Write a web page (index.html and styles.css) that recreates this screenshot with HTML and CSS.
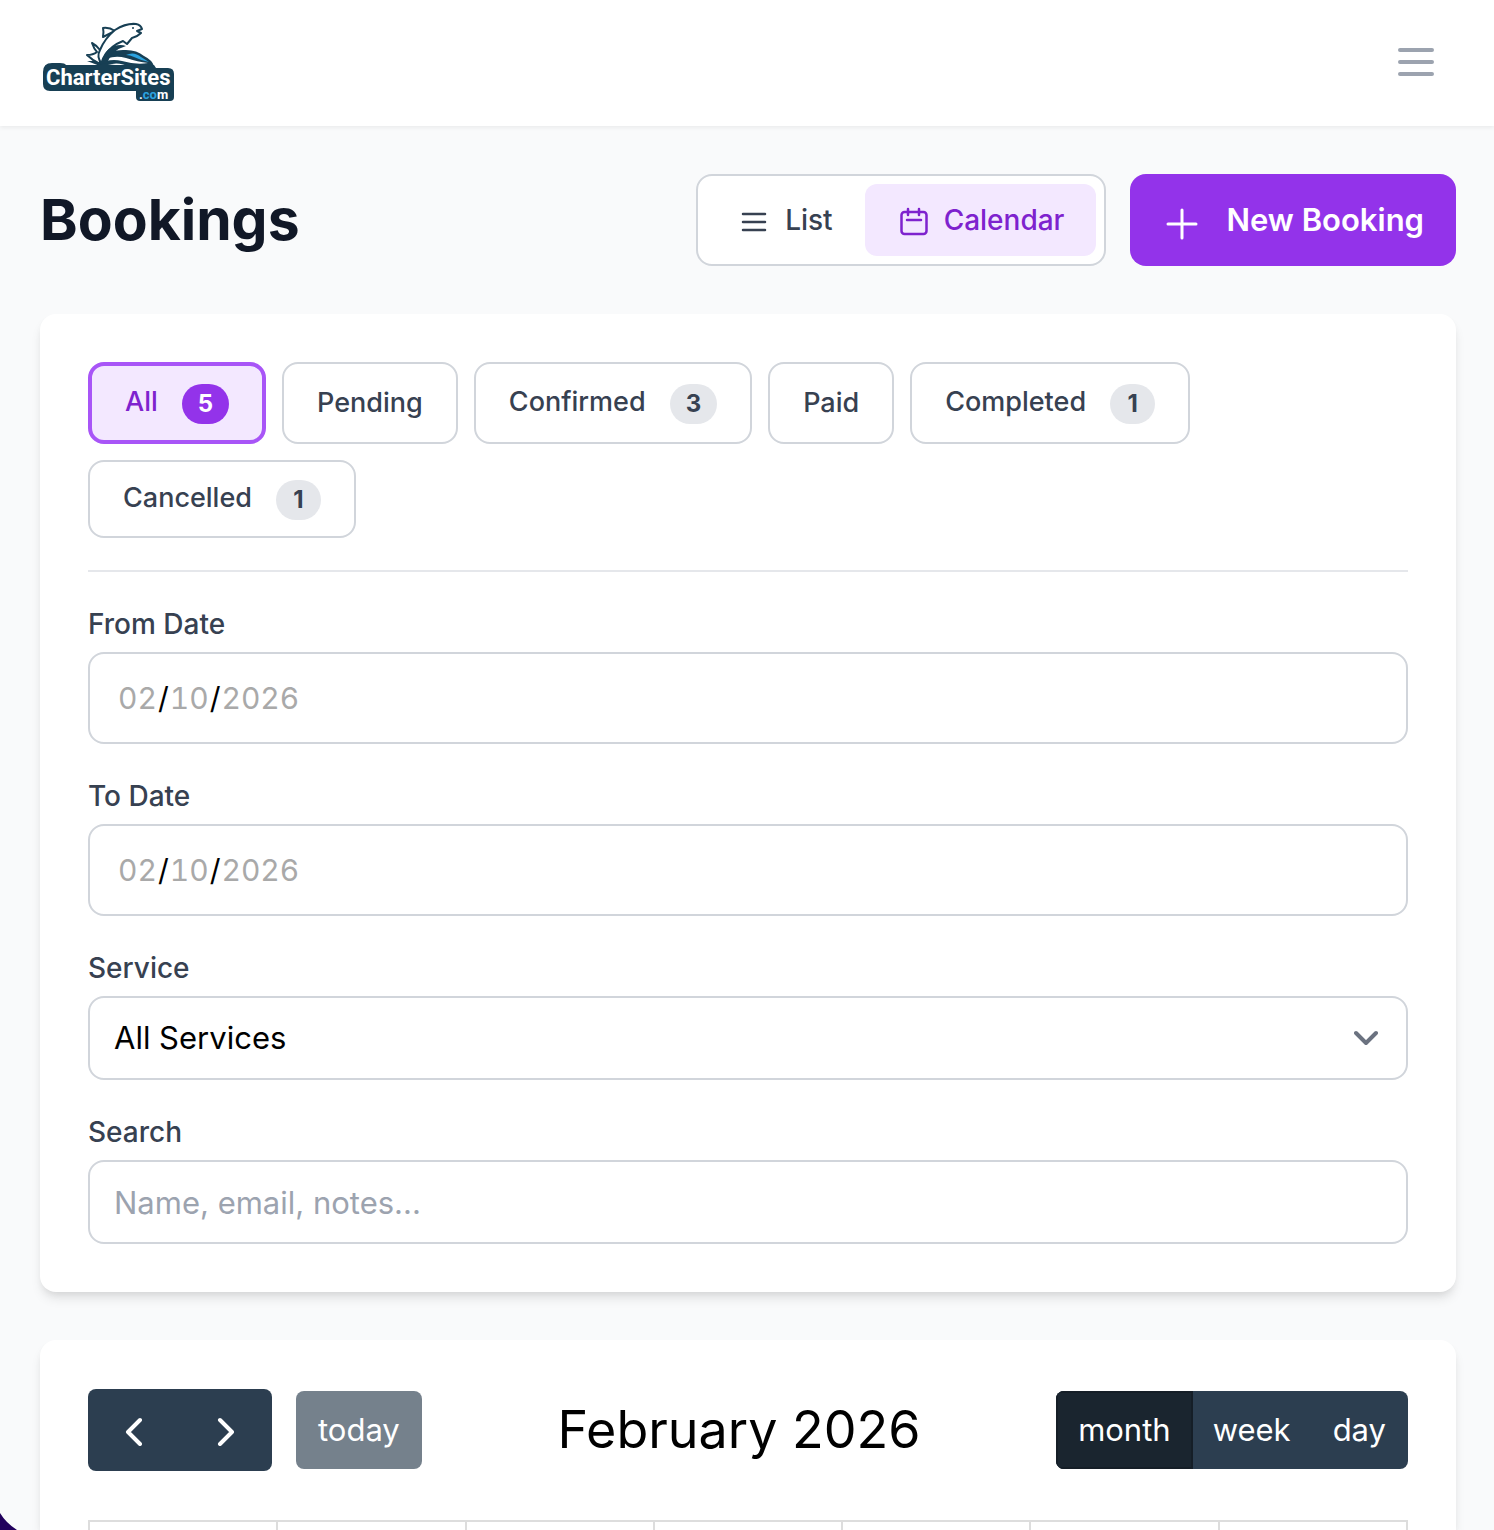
FILE: index.html
```html
<!DOCTYPE html>
<html lang="en">
<head>
<meta charset="utf-8">
<meta name="viewport" content="width=device-width, initial-scale=1">
<title>Bookings</title>
<link rel="stylesheet" href="styles.css">
</head>
<body>
<header class="topbar">
  <a class="brand" href="#" aria-label="CharterSites.com">
    <svg class="logo" viewBox="0 0 136 84" width="136" height="84">
      <!-- waves -->
      <path class="navy" d="M60 36 Q70 28 84 29 Q95 29 102 35 Q110 39 112 45 L112 54 L52 54 Q54 42 60 36 Z"/>
      <path class="wave" d="M56 43 Q68 33 84 37 Q96 41 106 42 Q94 44 80 40 Q68 37 56 43 Z"/>
      <path class="wave" d="M66 44 Q76 40 88 46 L82 46 Q74 43 66 44 Z"/>
      <path class="sky" d="M84 34 Q92 30 99 36 L107 41 Q98 39 92 36 Q88 34 84 34 Z"/>
      <path class="navy" d="M58 45 L45 40 L54 40 L46 34 L56 37 L60 44 Z"/>
      <!-- fish -->
      <path class="fish" d="M61 16 Q62 11 61 7 Q67 6 73 10 Z"/>
      <path class="fish" d="M58 29 Q54 24 50 22 Q52 28 55 31 Q51 34 45 34 Q50 39 58 43 Z"/>
      <path class="fish" d="M60 43 Q54 36 58 29 Q63 17 73 9 Q84 2 94 3 Q99 4 100 8 L95 10 L99 12 Q95 16 90 17 L85 23 L81 20 Q68 25 63 35 Z"/>
      <path class="navy" d="M58 43 Q62 29 72 25 Q79 23 84 25 Q70 29 65 42 Z"/>
      <circle class="navy" cx="91" cy="7" r="1"/>
      <!-- wordmark -->
      <rect class="navy" x="94" y="62" width="38" height="18" rx="4"/>
      <path class="navy" d="M10 42 H18 Q23 42 24 44 H112 L114 47 H126 Q132 47 132 53 V64 Q132 70 126 70 H8 Q1 70 1 63 V51 Q1 42 10 42 Z"/>
      <text class="word" x="4" y="64">CharterSites</text>
      <text class="dotcom" x="97" y="78">.<tspan class="sky">co</tspan>m</text>
    </svg>
  </a>
  <button class="menu" type="button" aria-label="Open menu">
    <svg viewBox="0 0 48 48" width="48" height="48"><path d="M8 11H40M8 23H40M8 35H40"/></svg>
  </button>
</header>

<main class="page">
  <div class="heading">
    <h1>Bookings</h1>
    <div class="actions">
      <div class="views">
        <button class="view" type="button">
          <svg viewBox="0 0 64 64" width="32" height="32"><path d="M10 20H54M10 36H54M10 52H54"/></svg>
          <span>List</span>
        </button>
        <button class="view view-on" type="button">
          <svg viewBox="0 0 64 64" width="32" height="32"><path d="M22 10V22M44 10V22M20 32H48"/><rect x="9" y="16" width="50" height="44" rx="6"/></svg>
          <span>Calendar</span>
        </button>
      </div>
      <button class="new" type="button">
        <svg viewBox="0 0 40 40" width="40" height="40"><path d="M6 24H34M20 10V38"/></svg>
        <span>New Booking</span>
      </button>
    </div>
  </div>

  <section class="card">
    <div class="tabs">
      <button class="tab tab-on" type="button"><span>All</span><b>5</b></button>
      <button class="tab" type="button"><span>Pending</span></button>
      <button class="tab" type="button"><span>Confirmed</span><b>3</b></button>
      <button class="tab" type="button"><span>Paid</span></button>
      <button class="tab" type="button"><span>Completed</span><b>1</b></button>
      <button class="tab" type="button"><span>Cancelled</span><b>1</b></button>
    </div>
    <form class="filters">
      <div class="field">
        <label for="from">From Date</label>
        <input class="date" id="from" type="date" value="2026-02-10">
      </div>
      <div class="field">
        <label for="to">To Date</label>
        <input class="date" id="to" type="date" value="2026-02-10">
      </div>
      <div class="field">
        <label for="service">Service</label>
        <div class="select">
          <select id="service"><option>All Services</option></select>
          <svg viewBox="0 0 24 24" width="24" height="24"><path d="M2 7L12 17L22 7"/></svg>
        </div>
      </div>
      <div class="field">
        <label for="search">Search</label>
        <input id="search" type="text" placeholder="Name, email, notes...">
      </div>
    </form>
  </section>

  <section class="card calendar">
    <div class="toolbar">
      <div class="group-left">
        <div class="group">
          <button class="arrow" type="button" aria-label="Previous month"><svg viewBox="0 0 32 32" width="32" height="32"><path d="M22 6L10 18L22 30"/></svg></button>
          <button class="arrow" type="button" aria-label="Next month"><svg viewBox="0 0 32 32" width="32" height="32"><path d="M10 6L22 18L10 30"/></svg></button>
        </div>
        <button class="tool today" type="button" disabled>today</button>
      </div>
      <h2>February 2026</h2>
      <div class="group">
        <button class="tool tool-on" type="button">month</button>
        <button class="tool" type="button">week</button>
        <button class="tool" type="button">day</button>
      </div>
    </div>
    <table class="month">
      <tbody><tr><td></td><td></td><td></td><td></td><td></td><td></td><td></td></tr></tbody>
    </table>
  </section>
</main>
<svg class="corner" viewBox="0 0 17 17" width="17" height="17"><path d="M0 0Q6 10 17 17H0Z"/></svg>
</body>
</html>
```
FILE: styles.css
```css
* { box-sizing: border-box; }
body {
  margin: 0;
  min-height: 100vh;
  display: flex;
  flex-direction: column;
  background: #f9fafb;
  color: #374151;
  font-family: Inter, "Liberation Sans", sans-serif;
  font-size: 28px;
  line-height: 40px;
}
button, input, select { font: inherit; color: inherit; margin: 0; }
button { border: 0; background: none; padding: 0; }
svg { display: block; flex: none; fill: none; stroke: currentColor; stroke-width: 2; stroke-linecap: round; stroke-linejoin: round; }

.topbar {
  display: flex;
  justify-content: space-between;
  align-items: center;
  height: 126px;
  padding: 0 54px 0 42px;
  background: #fff;
  box-shadow: 0 2px 4px rgba(0, 0, 0, .06);
}
.logo { stroke: none; }
.navy { fill: #173f54; }
.wave { fill: #fff; }
.sky { fill: #2ba3e0; }
.fish { fill: #fff; stroke: #173f54; stroke-width: 2; }
.word { fill: #fff; font: bold 22px Roboto, sans-serif; }
.dotcom { fill: #fff; font: bold 13px Roboto, sans-serif; }
.menu { color: #9ca3af; }
.menu svg { stroke-width: 4; }

.page { flex: 1; display: flex; flex-direction: column; gap: 48px; padding: 48px 38px 0 40px; }
.heading { display: flex; justify-content: space-between; align-items: center; }
h1 { margin: 0; font-size: 57px; line-height: 72px; font-weight: 700; color: #111827; }
.actions { display: flex; gap: 24px; }
.views { display: flex; padding: 8px; background: #fff; border: 2px solid #d1d5db; border-radius: 16px; }
.view { display: flex; align-items: center; gap: 15px; height: 72px; padding: 0 32px; border-radius: 12px; font-weight: 500; }
.view svg { stroke-width: 5; }
.view-on { background: #f3e8ff; color: #7e22ce; }
.new { display: flex; align-items: center; gap: 24px; height: 92px; padding: 0 32px; border-radius: 16px; background: #9333ea; color: #fff; font-size: 31px; font-weight: 600; }
.new svg { stroke-width: 3; }

.card {
  padding: 48px;
  background: #fff;
  border-radius: 16px;
  box-shadow: 0 8px 12px -2px rgba(0, 0, 0, .1), 0 4px 8px -4px rgba(0, 0, 0, .1);
}
.tabs { display: flex; flex-wrap: wrap; gap: 16px; padding-bottom: 32px; border-bottom: 2px solid #e5e7eb; }
.tab { display: flex; align-items: center; gap: 24px; padding: 16px 33px; border: 2px solid #d1d5db; border-radius: 16px; font-size: 27px; font-weight: 500; }
.tab b { margin-top: 2px; min-width: 45px; padding: 0 16px; border-radius: 20px; background: #e5e7eb; font-size: 24px; font-weight: 700; }
.tab span:not(:only-child) { margin-bottom: 2px; }
.tab-on { border: 4px solid #a855f7; background: #f3e8ff; color: #7e22ce; }
.tab-on b { background: #9333ea; color: #fff; }

.filters { display: flex; flex-direction: column; gap: 32px; padding-top: 32px; }
.field { display: flex; flex-direction: column; gap: 8px; }
label { font-weight: 500; }
input, select { width: 100%; height: 84px; padding: 0 24px; border: 2px solid #d1d5db; border-radius: 16px; background: #fff; color: #000; font-size: 31px; appearance: none; }
.date { height: 92px; padding: 0 27px; font-size: 30px; font-variant-numeric: tabular-nums; }
.date::-webkit-calendar-picker-indicator { display: none; }
.date::-webkit-datetime-edit-month-field,
.date::-webkit-datetime-edit-day-field,
.date::-webkit-datetime-edit-year-field { color: #a9a9a9; }
input::placeholder { color: #9ca3af; }
.select { display: grid; align-items: center; }
.select select, .select svg { grid-area: 1 / 1; }
.select svg { justify-self: end; margin-right: 30px; color: #6b7280; stroke-width: 4; pointer-events: none; }

.calendar { flex: 1; display: flex; flex-direction: column; gap: 48px; padding-bottom: 0; border-radius: 16px 16px 0 0; }
.toolbar { display: flex; justify-content: space-between; align-items: center; height: 84px; }
.group-left { display: flex; align-items: center; gap: 24px; }
.group { display: flex; border-radius: 8px; overflow: hidden; background: #2c3e50; color: #fff; }
.arrow { display: grid; place-items: center; width: 92px; height: 82px; }
.arrow svg { stroke-width: 4; }
.tool { height: 78px; padding: 0 22px; font-size: 31px; }
.tool + .tool { margin-left: -2px; }
.today { border-radius: 8px; background: #2c3e50; color: #fff; opacity: .65; }
.tool-on { background: #1a252f; box-shadow: inset 0 0 0 2px #151e27; }
h2 { margin: 0; font-size: 52px; line-height: 72px; font-weight: 400; color: #000; }
.month { flex: 1; width: 100%; table-layout: fixed; border-collapse: collapse; }
.month td { padding: 0; border: 2px solid #ddd; border-bottom: 0; }
.corner { position: fixed; left: 0; bottom: 0; fill: #21005c; stroke: none; }
```
